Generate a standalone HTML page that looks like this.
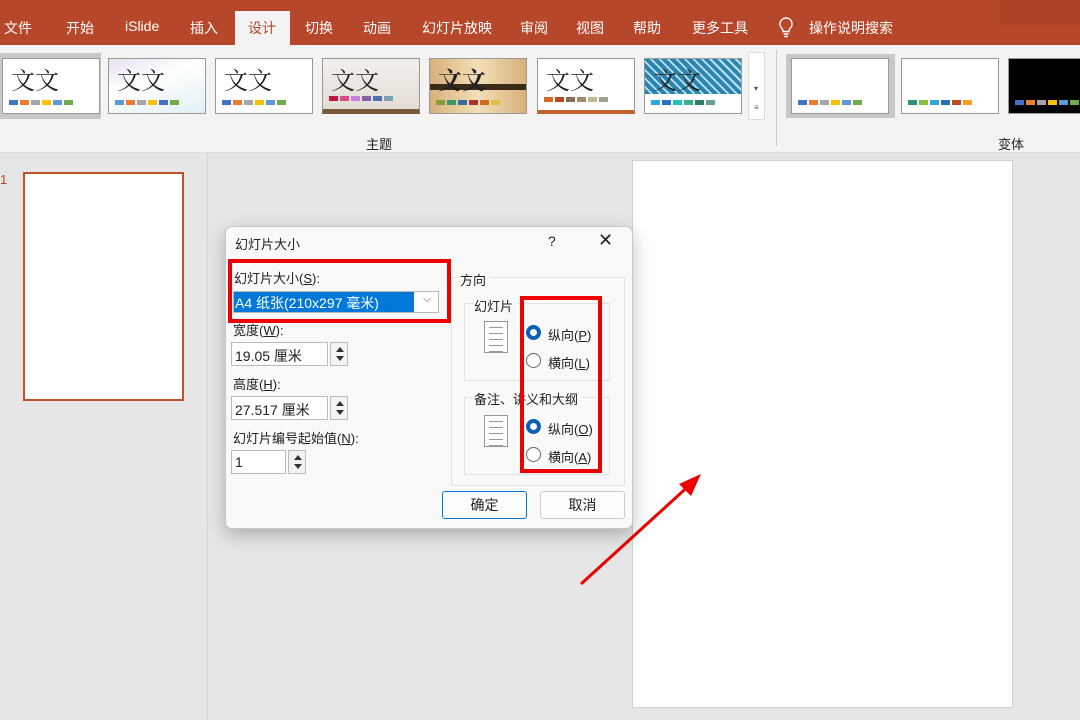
<!DOCTYPE html>
<html><head><meta charset="utf-8"><style>
*{margin:0;padding:0;box-sizing:border-box}
body{width:1080px;height:720px;overflow:hidden;position:relative;background:#e6e6e6;font-family:"Liberation Sans","Noto Sans CJK SC",sans-serif;font-size:13px;color:#222}
.a{position:absolute}
.tab{position:absolute;top:18px;color:#fff;font-size:14px}
.th{position:absolute;top:58px;width:98px;height:56px;background:#fff;border:1px solid #999}
.th .t{position:absolute;left:8px;top:2px;font-size:24px;font-family:"Noto Serif CJK SC",serif;color:#222}
.sw{position:absolute;left:6px;bottom:8px;display:flex;gap:2px}
.sw i{display:block;width:9px;height:5px}
.lbl{position:absolute;font-size:13px}
.in{position:absolute;background:#fff;border:1px solid #bbb;height:24px;font-size:14px;padding:3px 3px}
.sp{position:absolute;width:18px;height:24px;border:1px solid #bbb;background:#f3f3f3}
.sp:before{content:"";position:absolute;left:5px;top:4px;border:4px solid transparent;border-bottom:5px solid #333;border-top:0}
.sp:after{content:"";position:absolute;left:5px;bottom:4px;border:4px solid transparent;border-top:5px solid #333;border-bottom:0}
.rad{position:absolute;width:15px;height:15px;border-radius:50%;border:1px solid #666;background:#fff}
.rad.on{border:4px solid #0c5fb5}
.doc{position:absolute;width:24px;height:32px;background:#fff;border:1px solid #999}
.doc i{display:block;height:1px;background:#999;margin:5px 4px 0}
.red{position:absolute;border:4px solid #e00}
u{text-decoration:underline}
</style></head><body>
<div class="a" style="left:0;top:0;width:1080px;height:45px;background:#b7472a"></div>
<div class="a" style="left:1000px;top:0;width:80px;height:25px;background:#a83f25;opacity:.6"></div>
<div class="tab" style="left:4px">文件</div>
<div class="tab" style="left:66px">开始</div>
<div class="tab" style="left:125px">iSlide</div>
<div class="tab" style="left:190px">插入</div>
<div class="a" style="left:235px;top:11px;width:55px;height:34px;background:#f3f3f3"></div>
<div class="tab" style="left:248px;color:#b7472a">设计</div>
<div class="tab" style="left:305px">切换</div>
<div class="tab" style="left:363px">动画</div>
<div class="tab" style="left:422px">幻灯片放映</div>
<div class="tab" style="left:520px">审阅</div>
<div class="tab" style="left:576px">视图</div>
<div class="tab" style="left:633px">帮助</div>
<div class="tab" style="left:692px">更多工具</div>
<svg class="a" style="left:778px;top:16px" width="16" height="22" viewBox="0 0 16 22"><path d="M8 2a6 6 0 0 0-4 10.5c1 1 1 2 1 3h6c0-1 0-2 1-3A6 6 0 0 0 8 2zM5.5 18h5M6 20.5h4" fill="none" stroke="#fff" stroke-width="1.4"/></svg>
<div class="tab" style="left:809px">操作说明搜索</div>
<div class="a" style="left:0;top:45px;width:1080px;height:108px;background:#f3f3f3;border-bottom:1px solid #ddd"></div>
<div class="a" style="left:0;top:53px;width:101px;height:66px;background:#c8c8c8"></div>
<div class="th" style="left:2px"><div class="t">文文</div><div class="sw"><i style="background:#4472c4"></i><i style="background:#ed7d31"></i><i style="background:#a5a5a5"></i><i style="background:#ffc000"></i><i style="background:#5b9bd5"></i><i style="background:#70ad47"></i></div></div>
<div class="th" style="left:108px;background:linear-gradient(160deg,#e8e0f0,#fff 40%,#dff0f3)"><div class="t">文文</div><div class="sw"><i style="background:#5b9bd5"></i><i style="background:#ed7d31"></i><i style="background:#a5a5a5"></i><i style="background:#ffc000"></i><i style="background:#4472c4"></i><i style="background:#70ad47"></i></div></div>
<div class="th" style="left:215px"><div class="t">文文</div><div class="sw"><i style="background:#4472c4"></i><i style="background:#ed7d31"></i><i style="background:#a5a5a5"></i><i style="background:#ffc000"></i><i style="background:#5b9bd5"></i><i style="background:#70ad47"></i></div></div>
<div class="th" style="left:322px;background:linear-gradient(#f2efeb,#e4ddd6);border-bottom:5px solid #7a5a3a"><div class="t">文文</div><div class="sw"><i style="background:#c0143c"></i><i style="background:#e0488c"></i><i style="background:#c77fe0"></i><i style="background:#8064a2"></i><i style="background:#4f6fae"></i><i style="background:#7ba0b0"></i></div></div>
<div class="th" style="left:429px;background:linear-gradient(90deg,#d9b07a,#f2dfb8,#d9b07a)"><div class="a" style="left:0;top:25px;width:96px;height:6px;background:#3a2a1a"></div><div class="t" style="font-weight:bold">文文</div><div class="sw"><i style="background:#8a9a3a"></i><i style="background:#3a9a6a"></i><i style="background:#3a6aa0"></i><i style="background:#b03030"></i><i style="background:#d06a20"></i><i style="background:#e0c040"></i></div></div>
<div class="th" style="left:537px;border-bottom:4px solid #c0622a"><div class="t">文文</div><div class="sw"><i style="background:#d06a20"></i><i style="background:#b04a20"></i><i style="background:#8a6a5a"></i><i style="background:#a08a6a"></i><i style="background:#c0b890"></i><i style="background:#a0a090"></i></div></div>
<div class="th" style="left:644px"><div class="a" style="left:0;top:0;width:96px;height:35px;background:repeating-linear-gradient(45deg,#2a86b0 0 4px,#bfe0ee 4px 6px)"></div><div class="t">文文</div><div class="sw"><i style="background:#2aa8e0"></i><i style="background:#2a70c0"></i><i style="background:#20c0c0"></i><i style="background:#30b090"></i><i style="background:#2a8060"></i><i style="background:#60a0a0"></i></div></div>
<div class="a" style="left:748px;top:52px;width:17px;height:68px;background:#fff;border:1px solid #ddd"></div>
<div class="a" style="left:754px;top:84px;font-size:8px;color:#555">▾</div>
<div class="a" style="left:754px;top:103px;font-size:8px;color:#555">≡</div>
<div class="lbl" style="left:366px;top:134px">主题</div>
<div class="a" style="left:776px;top:50px;width:1px;height:96px;background:#ccc"></div>
<div class="a" style="left:786px;top:54px;width:109px;height:64px;background:#c8c8c8"></div>
<div class="th" style="left:791px"><div class="sw" style="left:6px"><i style="background:#4472c4"></i><i style="background:#ed7d31"></i><i style="background:#a5a5a5"></i><i style="background:#ffc000"></i><i style="background:#5b9bd5"></i><i style="background:#70ad47"></i></div></div>
<div class="th" style="left:901px"><div class="sw"><i style="background:#2a9080"></i><i style="background:#8ac040"></i><i style="background:#30a8d8"></i><i style="background:#2a70b0"></i><i style="background:#c04a20"></i><i style="background:#f0a020"></i></div></div>
<div class="th" style="left:1008px;background:#000;width:80px"><div class="sw"><i style="background:#4472c4"></i><i style="background:#ed7d31"></i><i style="background:#a5a5a5"></i><i style="background:#ffc000"></i><i style="background:#5b9bd5"></i><i style="background:#70ad47"></i></div></div>
<div class="lbl" style="left:998px;top:134px">变体</div>
<div class="a" style="left:207px;top:153px;width:1px;height:567px;background:#d6d6d6"></div>
<div class="a" style="left:0;top:172px;color:#b7472a;font-size:13px">1</div>
<div class="a" style="left:23px;top:172px;width:161px;height:229px;background:#fff;border:2px solid #c0502e"></div>
<div class="a" style="left:632px;top:160px;width:381px;height:548px;background:#fff;border:1px solid #d0d0d0"></div>
<svg class="a" style="left:575px;top:470px" width="130" height="120"><path d="M6 114L118 12" stroke="#e00" stroke-width="3"/><path d="M126 4L104 14L116 26Z" fill="#e00"/></svg>
<div class="a" style="left:225px;top:226px;width:408px;height:303px;background:#f9f9f9;border:1px solid #c8c8c8;border-radius:7px;box-shadow:0 6px 18px rgba(0,0,0,.25)"></div>
<div class="lbl" style="left:235px;top:234px">幻灯片大小</div>
<div class="lbl" style="left:548px;top:233px;font-size:14px">?</div>
<div class="lbl" style="left:598px;top:230px;font-size:18px">✕</div>
<div class="lbl" style="left:234px;top:268px">幻灯片大小(<u>S</u>):</div>
<div class="a" style="left:233px;top:291px;width:206px;height:22px;background:#fff;border:1px solid #bbb"></div>
<div class="a" style="left:234px;top:292px;width:180px;height:20px;background:#0078d7;color:#fff;font-size:14px;padding:1px 1px">A4 纸张(210x297 毫米)</div>
<div class="a" style="left:423px;top:293px;font-size:11px;color:#555">⌵</div>
<div class="red" style="left:228px;top:259px;width:223px;height:64px"></div>
<div class="lbl" style="left:233px;top:320px">宽度(<u>W</u>):</div>
<div class="in" style="left:231px;top:342px;width:97px">19.05 厘米</div><div class="sp" style="left:330px;top:342px"></div>
<div class="lbl" style="left:233px;top:374px">高度(<u>H</u>):</div>
<div class="in" style="left:231px;top:396px;width:97px">27.517 厘米</div><div class="sp" style="left:330px;top:396px"></div>
<div class="lbl" style="left:233px;top:428px">幻灯片编号起始值(<u>N</u>):</div>
<div class="in" style="left:231px;top:450px;width:55px">1</div><div class="sp" style="left:288px;top:450px"></div>
<div class="a" style="left:451px;top:277px;width:174px;height:209px;border:1px solid #e2e2e2"></div>
<div class="lbl" style="left:460px;top:270px;background:#f9f9f9;padding-right:4px">方向</div>
<div class="a" style="left:464px;top:303px;width:146px;height:78px;border:1px solid #e2e2e2"></div>
<div class="lbl" style="left:474px;top:296px;background:#f9f9f9;padding-right:4px">幻灯片</div>
<div class="doc" style="left:484px;top:321px"><i></i><i></i><i></i><i></i><i></i></div>
<div class="rad on" style="left:526px;top:325px"></div><div class="lbl" style="left:548px;top:325px">纵向(<u>P</u>)</div>
<div class="rad" style="left:526px;top:353px"></div><div class="lbl" style="left:548px;top:353px">横向(<u>L</u>)</div>
<div class="a" style="left:464px;top:397px;width:146px;height:78px;border:1px solid #e2e2e2"></div>
<div class="lbl" style="left:474px;top:389px;background:#f9f9f9;padding-right:4px">备注、讲义和大纲</div>
<div class="doc" style="left:484px;top:415px"><i></i><i></i><i></i><i></i><i></i></div>
<div class="rad on" style="left:526px;top:419px"></div><div class="lbl" style="left:548px;top:419px">纵向(<u>O</u>)</div>
<div class="rad" style="left:526px;top:447px"></div><div class="lbl" style="left:548px;top:447px">横向(<u>A</u>)</div>
<div class="red" style="left:520px;top:296px;width:82px;height:177px"></div>
<div class="a" style="left:442px;top:491px;width:85px;height:28px;background:#fdfdfd;border:1px solid #0078d7;border-radius:3px;text-align:center;line-height:26px;font-size:14px">确定</div>
<div class="a" style="left:540px;top:491px;width:85px;height:28px;background:#fdfdfd;border:1px solid #ccc;border-radius:3px;text-align:center;line-height:26px;font-size:14px">取消</div>
</body></html>
